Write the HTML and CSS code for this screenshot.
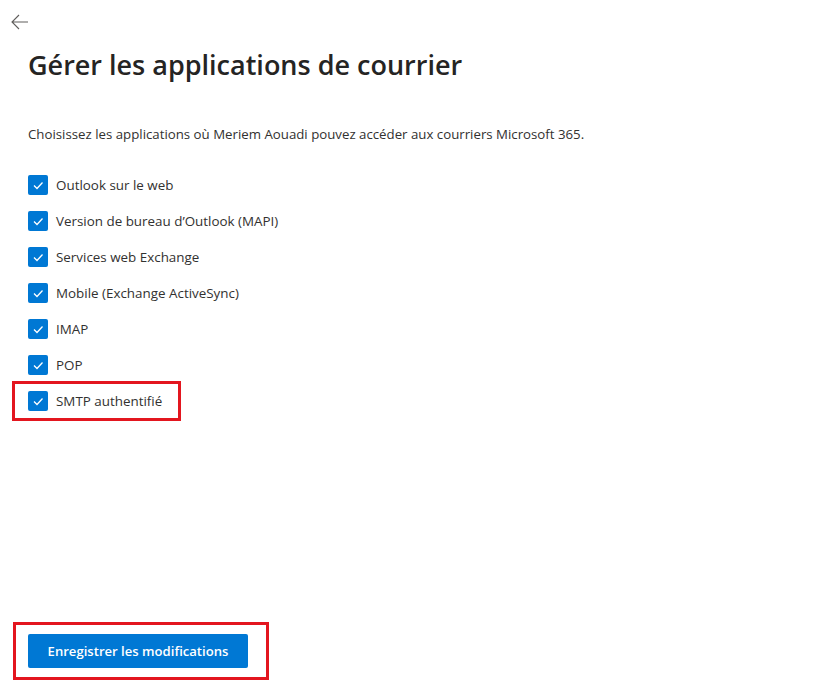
FILE: index.html
```html
<!DOCTYPE html>
<html lang="fr">
<head>
    <meta charset="UTF-8">
    <title>Gérer les applications de courrier</title>
    <link rel="stylesheet" href="styles.css">
</head>

<body>
<div class="panel">
    <button class="back" type="button" aria-label="Retour">
        <svg width="18" height="16" viewBox="0 0 18 16">
            <path d="M17 8H1.5M8 1L1 8l7 7" fill="none" stroke="#605e5c" stroke-width="1.1"/>
        </svg>
    </button>

    <h1 class="title">Gérer les applications de courrier</h1>

    <p class="intro">Choisissez les applications où Meriem Aouadi pouvez accéder aux courriers Microsoft 365.</p>

    <div class="apps">
        <label class="app"><span class="check"></span>Outlook sur le web</label>
        <label class="app"><span class="check"></span>Version de bureau d’Outlook (MAPI)</label>
        <label class="app"><span class="check"></span>Services web Exchange</label>
        <label class="app"><span class="check"></span>Mobile (Exchange ActiveSync)</label>
        <label class="app"><span class="check"></span>IMAP</label>
        <label class="app"><span class="check"></span>POP</label>
        <div class="mark mark-row">
            <label class="app"><span class="check"></span>SMTP authentifié</label>
        </div>
    </div>

    <div class="footer">
        <div class="mark mark-button">
            <button class="save" type="button">Enregistrer les modifications</button>
        </div>
    </div>
</div>
</body>
</html>
```

FILE: styles.css
```css
html, body {
    margin: 0;
    background: #fff;
}

body {
    font-family: "Open Sans", "Noto Sans", sans-serif;
    color: #323130;
}

.panel {
    box-sizing: border-box;
    min-height: 100vh;
    display: flex;
    flex-direction: column;
    align-items: flex-start;
    padding: 14px 0 8px 28px;
}

.back {
    display: flex;
    margin-left: -17px;
    padding: 0;
    border: 0;
    background: none;
    cursor: pointer;
}

.title {
    margin: 17px 0 0;
    font-size: 27px;
    font-weight: 600;
    line-height: 36px;
    color: #252423;
}

.intro {
    margin: 41px 0 0;
    font-size: 13.25px;
    line-height: 20px;
}

.apps {
    display: flex;
    flex-direction: column;
    gap: 16px;
    margin-top: 31px;
}

.app {
    display: flex;
    align-items: center;
    gap: 8px;
    height: 20px;
    font-size: 13.4px;
    cursor: pointer;
}

.check {
    width: 20px;
    height: 20px;
    border-radius: 2px;
    background: #0078d4 url("data:image/svg+xml;utf8,<svg xmlns='http://www.w3.org/2000/svg' width='20' height='20'><path d='M6 10.5l3 3 5.5-6' fill='none' stroke='white' stroke-width='1.3'/></svg>") no-repeat center;
    flex: none;
}

.mark {
    border: 3px solid #e3161f;
}

.mark-row {
    margin: -10px 0 -10px -16px;
    padding: 7px 16px 7px 13px;
    width: fit-content;
}

.footer {
    margin-top: auto;
}

.mark-button {
    margin-left: -15px;
    padding: 9px 18px 9px 12px;
}

.save {
    display: block;
    width: 220px;
    height: 34px;
    border: 0;
    border-radius: 2px;
    background: #0078d4;
    color: #fff;
    font-family: inherit;
    font-size: 13.1px;
    font-weight: 600;
    cursor: pointer;
}
```
